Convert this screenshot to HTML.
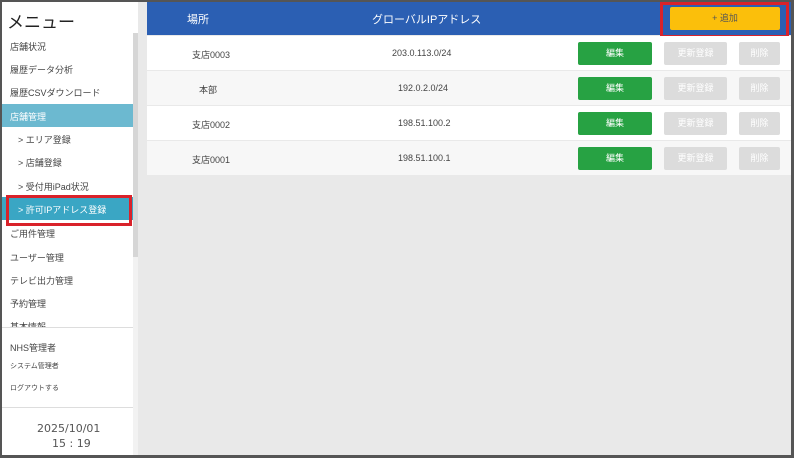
<!DOCTYPE html><html><head><meta charset="utf-8"><style>
*{margin:0;padding:0;box-sizing:border-box}
body{width:794px;height:458px;background:#555;font-family:"Liberation Sans","Noto Sans CJK JP",sans-serif;position:relative;overflow:hidden}
.frame{position:absolute;left:2px;top:2px;width:789px;height:453px;background:#e9e9e9;overflow:hidden}
.side{position:absolute;left:0;top:0;width:136px;height:453px;background:#fff}
.t{position:absolute;font-size:9px;color:#444;white-space:nowrap}
.band{position:absolute;left:0;width:131px;height:23px}
.scroll{position:absolute;left:131px;top:31px;width:5px;height:422px;background:#f2f2f2}
.thumb{position:absolute;left:131px;top:31px;width:5px;height:224px;background:#d6d6d6}
.hdr{position:absolute;left:145px;top:0;width:644px;height:33px;background:#2b5fb3;color:#fff;font-size:11px}
.row{position:absolute;left:145px;width:644px;height:34px;font-size:9px;color:#333}
.b{position:absolute;height:23px;border-radius:2px;font-size:9px;text-align:center;line-height:23px}
</style></head><body><div class="frame">
<div class="side">
<div class="t" style="left:5px;top:6px;font-size:17px;color:#222">メニュー</div>
<div class="t" style="left:8px;top:38px">店舗状況</div>
<div class="t" style="left:8px;top:61px">履歴データ分析</div>
<div class="t" style="left:8px;top:84px">履歴CSVダウンロード</div>
<div class="band" style="top:102px;background:#6cb9d0"></div>
<div class="t" style="left:8px;top:108px;color:#fff">店舗管理</div>
<div class="t" style="left:16px;top:131px">&gt; エリア登録</div>
<div class="t" style="left:16px;top:154px">&gt; 店舗登録</div>
<div class="t" style="left:16px;top:178px">&gt; 受付用iPad状況</div>
<div class="band" style="top:195px;background:#3aa6c4"></div>
<div style="position:absolute;left:4px;top:193px;width:126px;height:31px;border:3px solid #d9222a"></div>
<div class="t" style="left:16px;top:201px;color:#fff">&gt; 許可IPアドレス登録</div>
<div class="t" style="left:8px;top:225px">ご用件管理</div>
<div class="t" style="left:8px;top:249px">ユーザー管理</div>
<div class="t" style="left:8px;top:272px">テレビ出力管理</div>
<div class="t" style="left:8px;top:295px">予約管理</div>
<div class="t" style="left:8px;top:318px">基本情報</div>
<div style="position:absolute;left:0;top:325px;width:136px;height:130px;background:#fff;border-top:1px solid #ddd"></div>
<div class="t" style="left:8px;top:339px">NHS管理者</div>
<div class="t" style="left:8px;top:359px;font-size:7px">システム管理者</div>
<div class="t" style="left:8px;top:381px;font-size:7px">ログアウトする</div>
<div style="position:absolute;left:0;top:405px;width:136px;border-top:1px solid #ddd"></div>
<div class="t" style="left:35px;top:420px;font-size:11px;color:#555;font-family:'DejaVu Sans',sans-serif">2025/10/01</div>
<div class="t" style="left:50px;top:435px;font-size:11px;color:#555;font-family:'DejaVu Sans',sans-serif">15 : 19</div>
<div class="scroll"></div><div class="thumb"></div>
</div>
<div class="hdr"><span style="position:absolute;left:40px;top:9px">場所</span><span style="position:absolute;left:225px;top:9px">グローバルIPアドレス</span></div>
<div style="position:absolute;left:658px;top:0;width:129px;height:36px;border:3px solid #d9222a"></div>
<div class="b" style="left:668px;top:5px;width:110px;background:#fbbf0b;color:#555">+ 追加</div>
<div class="row" style="top:34px;background:#fff"></div>
<div class="row" style="top:69px;background:#f7f7f7"></div>
<div class="row" style="top:104px;background:#fff"></div>
<div class="row" style="top:139px;background:#f7f7f7"></div>
<div class="t" style="left:190px;top:46px">支店0003</div><div class="t" style="left:390px;top:46px">203.0.113.0/24</div>
<div class="t" style="left:197px;top:81px">本部</div><div class="t" style="left:396px;top:81px">192.0.2.0/24</div>
<div class="t" style="left:190px;top:116px">支店0002</div><div class="t" style="left:396px;top:116px">198.51.100.2</div>
<div class="t" style="left:190px;top:151px">支店0001</div><div class="t" style="left:396px;top:151px">198.51.100.1</div>
<div class="b" style="left:576px;top:40px;width:74px;background:#27a243;color:#fff">編集</div>
<div class="b" style="left:662px;top:40px;width:63px;background:#dcdcdc;color:#fff">更新登録</div>
<div class="b" style="left:737px;top:40px;width:41px;background:#dcdcdc;color:#fff">削除</div>
<div class="b" style="left:576px;top:75px;width:74px;background:#27a243;color:#fff">編集</div>
<div class="b" style="left:662px;top:75px;width:63px;background:#dcdcdc;color:#fff">更新登録</div>
<div class="b" style="left:737px;top:75px;width:41px;background:#dcdcdc;color:#fff">削除</div>
<div class="b" style="left:576px;top:110px;width:74px;background:#27a243;color:#fff">編集</div>
<div class="b" style="left:662px;top:110px;width:63px;background:#dcdcdc;color:#fff">更新登録</div>
<div class="b" style="left:737px;top:110px;width:41px;background:#dcdcdc;color:#fff">削除</div>
<div class="b" style="left:576px;top:145px;width:74px;background:#27a243;color:#fff">編集</div>
<div class="b" style="left:662px;top:145px;width:63px;background:#dcdcdc;color:#fff">更新登録</div>
<div class="b" style="left:737px;top:145px;width:41px;background:#dcdcdc;color:#fff">削除</div>
</div></body></html>
